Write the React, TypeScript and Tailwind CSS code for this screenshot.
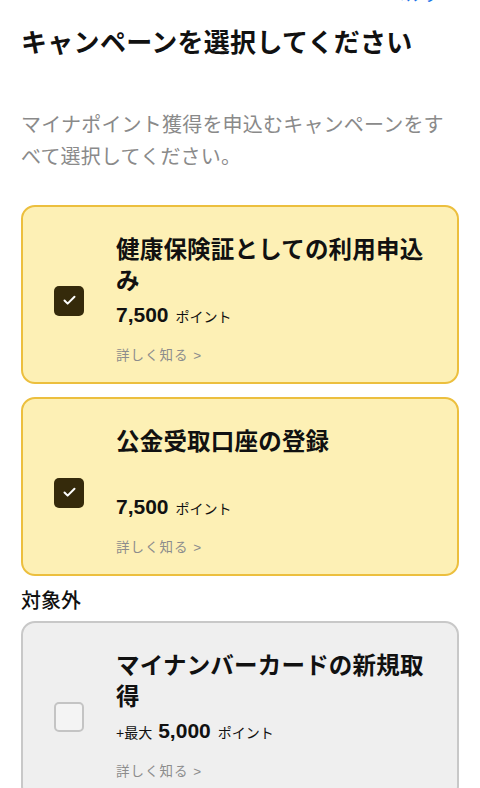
import { Check } from "lucide-react";

type Campaign = {
  title: string;
  points: string;
  prefix?: string;
  checked: boolean;
  disabled?: boolean;
};

const eligible: Campaign[] = [
  { title: "健康保険証としての利用申込み", points: "7,500", checked: true },
  { title: "公金受取口座の登録", points: "7,500", checked: true },
];

const excluded: Campaign[] = [
  { title: "マイナンバーカードの新規取得", points: "5,000", prefix: "+最大", checked: false, disabled: true },
];

const font = { fontFamily: '"Liberation Sans", "Noto Sans CJK JP", sans-serif' };

export default function App() {
  return (
    <div className="w-[480px] h-[788px] overflow-hidden bg-white text-[#111]" style={font}>
      <div className="flex justify-end pr-[38px] -mt-[14px] h-[20px]">
        <span className="text-[16px] text-[#1a73e8] leading-[20px] tracking-[2px]">ヘルプ</span>
      </div>

      <div className="px-[21px]">
        <h1 className="mt-[20px] text-[26px] font-bold leading-[34px] tracking-[0.3px]">
          キャンペーンを選択してください
        </h1>

        <p className="mt-[49px] text-[20px] leading-[32px] text-[#8a8a8a] tracking-[0.2px]">
          マイナポイント獲得を申込むキャンペーンをすべて選択してください。
        </p>

        <div className="mt-[32px] flex flex-col gap-[13px]">
          {eligible.map((c) => (
            <CampaignCard key={c.title} c={c} />
          ))}
        </div>

        <p className="mt-[12px] text-[20px] font-medium leading-[26px]">対象外</p>

        <div className="mt-[7px] flex flex-col gap-[13px]">
          {excluded.map((c) => (
            <CampaignCard key={c.title} c={c} />
          ))}
        </div>
      </div>
    </div>
  );
}

function CampaignCard({ c }: { c: Campaign }) {
  const box = c.disabled
    ? "bg-[#efefef] border-[#c8c8c8]"
    : "bg-[#fdf0b5] border-[#ecbf3e]";
  return (
    <div className={`flex items-center rounded-[14px] border-2 pl-[31px] pr-[24px] pt-[28px] pb-[16px] ${box}`}>
      <div className="w-[31px] shrink-0">
        {c.checked ? (
          <div className="w-[30px] h-[30px] rounded-[5px] bg-[#352a0b] flex items-center justify-center">
            <Check size={15} strokeWidth={3.2} className="text-white" />
          </div>
        ) : (
          <div className="w-[30px] h-[30px] rounded-[5px] border-2 border-[#c4c4c4] bg-[#f4f4f4]" />
        )}
      </div>
      <div className="ml-[31px] flex-1">
        <h2 className="min-h-[62px] text-[23.5px] font-bold leading-[31px] tracking-[0.2px]">{c.title}</h2>
        <div className="mt-[4px] flex items-baseline leading-[28px]">
          {c.prefix && <span className="mr-[6px] text-[14px]">{c.prefix}</span>}
          <span className="text-[21px] font-bold">{c.points}</span>
          <span className="ml-[7px] text-[14px]">ポイント</span>
        </div>
        <p className="mt-[15px] text-[13.5px] leading-[20px] text-[#8c8c8c] tracking-[1px]">詳しく知る &gt;</p>
      </div>
    </div>
  );
}
